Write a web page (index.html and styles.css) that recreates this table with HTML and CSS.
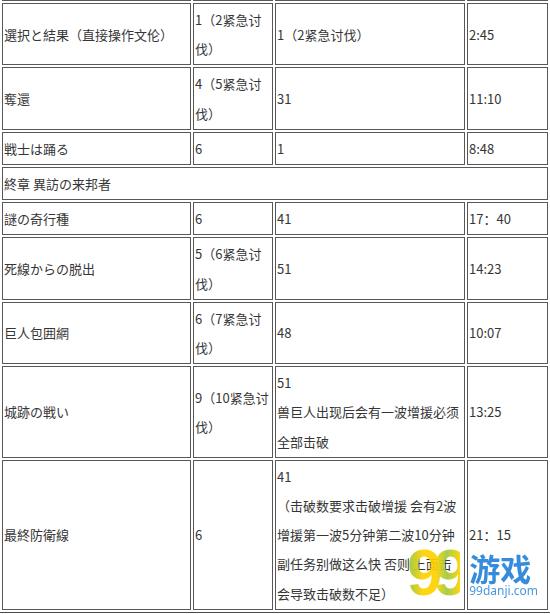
FILE: index.html
```html
<!DOCTYPE html>
<html lang="zh-CN">
<head>
<meta charset="utf-8">
<title>攻略表</title>
<link rel="stylesheet" href="styles.css">
</head>
<body>
<div class="page">
  <div class="frame">
    <table class="grid">
      <colgroup>
        <col class="c1"><col class="c2"><col class="c3"><col class="c4">
      </colgroup>
      <tr><td>&nbsp;</td><td></td><td></td><td></td></tr>
      <tr><td>選択と結果（直接操作文伦）</td><td>1（2紧急讨<br>伐）</td><td>1（2紧急讨伐）</td><td>2:45</td></tr>
      <tr><td>奪還</td><td>4（5紧急讨<br>伐）</td><td>31</td><td>11:10</td></tr>
      <tr><td>戦士は踊る</td><td>6</td><td>1</td><td>8:48</td></tr>
      <tr><td colspan="4">終章 異訪の来邦者</td></tr>
      <tr><td>謎の奇行種</td><td>6</td><td>41</td><td>17：40</td></tr>
      <tr><td>死線からの脱出</td><td>5（6紧急讨<br>伐）</td><td>51</td><td>14:23</td></tr>
      <tr><td>巨人包囲網</td><td>6（7紧急讨<br>伐）</td><td>48</td><td>10:07</td></tr>
      <tr><td>城跡の戦い</td><td>9（10紧急讨<br>伐）</td><td>51<br>兽巨人出现后会有一波增援必须<br>全部击破</td><td>13:25</td></tr>
      <tr><td>最終防衛線</td><td>6</td><td>41<br>（击破数要求击破增援 会有2波<br>增援第一波5分钟第二波10分钟<br>副任务别做这么快 否则 上面击<br>会导致击破数不足）</td><td>21：15</td></tr>
    </table>
  </div>
  <div class="watermark">
    <span class="wm-99">99</span>
    <span class="wm-text">
      <span class="wm-cn">游戏</span>
      <span class="wm-url">99danji.com</span>
    </span>
  </div>
</div>
</body>
</html>
```
FILE: styles.css
```css
html, body {
  margin: 0;
  padding: 0;
  background: #ffffff;
}

.page {
  position: relative;
  width: 550px;
  height: 614px;
  overflow: hidden;
}

.frame {
  overflow: hidden;
  border-bottom: 1px solid #4a4a4a;
}

.grid {
  width: 550px;
  table-layout: fixed;
  border-collapse: separate;
  border-spacing: 2px;
  margin-top: -34.2px;
  font-family: "Noto Sans CJK SC", "Noto Sans CJK JP", sans-serif;
  font-size: 13px;
  line-height: 29.2px;
  color: #363636;
}

.c1 { width: 189px; }
.c2 { width: 80px; }
.c3 { width: 190px; }
.c4 { width: 81px; }

.grid td {
  border: 1px solid #585858;
  padding: 1px 1px;
  white-space: nowrap;
  vertical-align: middle;
  text-align: left;
  overflow: hidden;
}

.watermark {
  position: absolute;
  left: 407px;
  top: 541px;
  display: flex;
  align-items: flex-start;
  opacity: 0.92;
}

.wm-99 {
  font-family: "Liberation Sans", sans-serif;
  font-weight: bold;
  font-size: 64px;
  line-height: 64px;
  letter-spacing: -9px;
  background: linear-gradient(90deg, #8cc63f 0%, #ffd200 30%, #ffd200 55%, #9ccc3c 75%, #ffd200 100%);
  -webkit-background-clip: text;
  background-clip: text;
  color: transparent;
}

.wm-text {
  display: flex;
  flex-direction: column;
  align-items: flex-start;
  margin-left: 9px;
  padding-top: 11px;
}

.wm-cn {
  font-family: "Noto Sans CJK SC", sans-serif;
  font-weight: bold;
  font-size: 31px;
  line-height: 32px;
  color: #2583d8;
}

.wm-url {
  font-family: "Noto Sans", sans-serif;
  font-size: 12px;
  line-height: 14px;
  color: #3a8fdc;
}
```
